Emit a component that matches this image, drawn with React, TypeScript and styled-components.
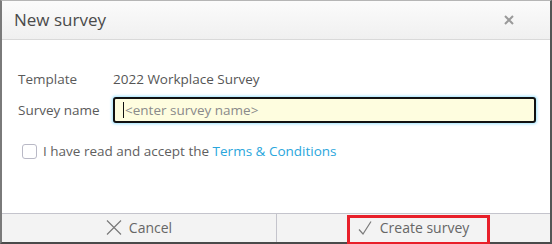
import React from "react";
import styled, { createGlobalStyle } from "styled-components";

const GlobalStyle = createGlobalStyle`
  html, body {
    margin: 0;
    padding: 0;
    background: #ffffff;
  }
  * {
    box-sizing: border-box;
  }
`;

const Dialog = styled.div`
  width: 552px;
  height: 244px;
  display: flex;
  flex-direction: column;
  border-left: 2px solid #7a7a7a;
  border-right: 2px solid #555555;
  border-top: 1px solid #b5b5b5;
  border-bottom: 2px solid #4a4a4a;
  font-family: "Open Sans", "Noto Sans", sans-serif;
  background: #ffffff;
`;

const Header = styled.div`
  height: 39px;
  display: flex;
  align-items: center;
  justify-content: space-between;
  padding: 0 36px 0 12px;
  background: linear-gradient(#fbfbfb, #f0f0f0);
  border-bottom: 1px solid #d9d9d9;
`;

const Title = styled.div`
  font-size: 17px;
  color: #4a4a4a;
  padding-bottom: 2px;
`;

const CloseButton = styled.div`
  display: flex;
  align-items: center;
  width: 10px;
  height: 10px;
`;

const Body = styled.div`
  flex: 1;
  display: flex;
  flex-direction: column;
  padding: 24px 14px 0 16px;
`;

const Row = styled.div<{ $height: number }>`
  display: grid;
  grid-template-columns: 95px 1fr;
  align-items: center;
  height: ${(p) => p.$height}px;
`;

const Label = styled.div`
  font-size: 13.5px;
  color: #5a5a5a;
`;

const Value = styled.div`
  font-size: 13.5px;
  color: #555555;
`;

const InputWrap = styled.div`
  position: relative;
`;

const Input = styled.input`
  width: 100%;
  height: 26px;
  border: 2px solid #111111;
  border-radius: 3px;
  background: #fefddf;
  box-shadow: 0 0 3px 1px #9fe3ff;
  padding: 0 0 1px 10px;
  font-family: inherit;
  font-size: 13.5px;
  color: #444;
  outline: none;

  &::placeholder {
    color: #8a8a8a;
  }
`;

const Caret = styled.span`
  position: absolute;
  left: 10px;
  top: 5px;
  width: 1px;
  height: 16px;
  background: #111;
`;

const CheckRow = styled.label`
  display: flex;
  align-items: center;
  gap: 6px;
  margin-top: 16px;
  padding-left: 4px;
  font-size: 13.5px;
  color: #5f5f5f;
`;

const Box = styled.span`
  width: 15px;
  height: 15px;
  border: 1px solid #b9b9c6;
  border-radius: 3px;
  background: #fff;
`;

const TermsLink = styled.a`
  color: #2aa6dc;
  text-decoration: none;
`;

const Footer = styled.div`
  position: relative;
  height: 29px;
  display: grid;
  grid-template-columns: 275px 1fr;
  background: #f3f3f3;
  border-top: 1px solid #c4c4cc;
`;

const FooterButton = styled.div<{ $divider?: boolean }>`
  display: flex;
  align-items: center;
  justify-content: center;
  gap: ${(p) => (p.$divider ? 7 : 8)}px;
  font-size: 14px;
  color: #666666;
  border-right: ${(p) => (p.$divider ? "1px solid #c4c4cc" : "none")};
  padding-bottom: 1px;
`;

const Highlight = styled.span`
  position: absolute;
  left: 345px;
  top: 1px;
  width: 143px;
  height: 30px;
  border: 3px solid #e8202a;
`;

export default function App() {
  return (
    <>
      <GlobalStyle />
      <Dialog>
        <Header>
          <Title>New survey</Title>
          <CloseButton>
            <svg width="10" height="10" viewBox="0 0 10 10">
              <path d="M1 1L9 9M9 1L1 9" stroke="#9a9a9a" strokeWidth="2" />
            </svg>
          </CloseButton>
        </Header>
        <Body>
          <Row $height={30}>
            <Label>Template</Label>
            <Value>2022 Workplace Survey</Value>
          </Row>
          <Row $height={32}>
            <Label>Survey name</Label>
            <InputWrap>
              <Input placeholder="<enter survey name>" />
              <Caret />
            </InputWrap>
          </Row>
          <CheckRow>
            <Box />
            <span>
              I have read and accept the{" "}
              <TermsLink href="#">Terms &amp; Conditions</TermsLink>
            </span>
          </CheckRow>
        </Body>
        <Footer>
          <FooterButton $divider>
            <svg width="16" height="15" viewBox="0 0 16 15">
              <path d="M1 0.5L15 14.5M15 0.5L1 14.5" stroke="#7a7a7a" strokeWidth="1.2" fill="none" />
            </svg>
            Cancel
          </FooterButton>
          <FooterButton>
            <svg width="14" height="14" viewBox="0 0 14 14">
              <path d="M1 8.5L5 13L13 0.5" stroke="#7a7a7a" strokeWidth="1.2" fill="none" />
            </svg>
            Create survey
          </FooterButton>
          <Highlight />
        </Footer>
      </Dialog>
    </>
  );
}
